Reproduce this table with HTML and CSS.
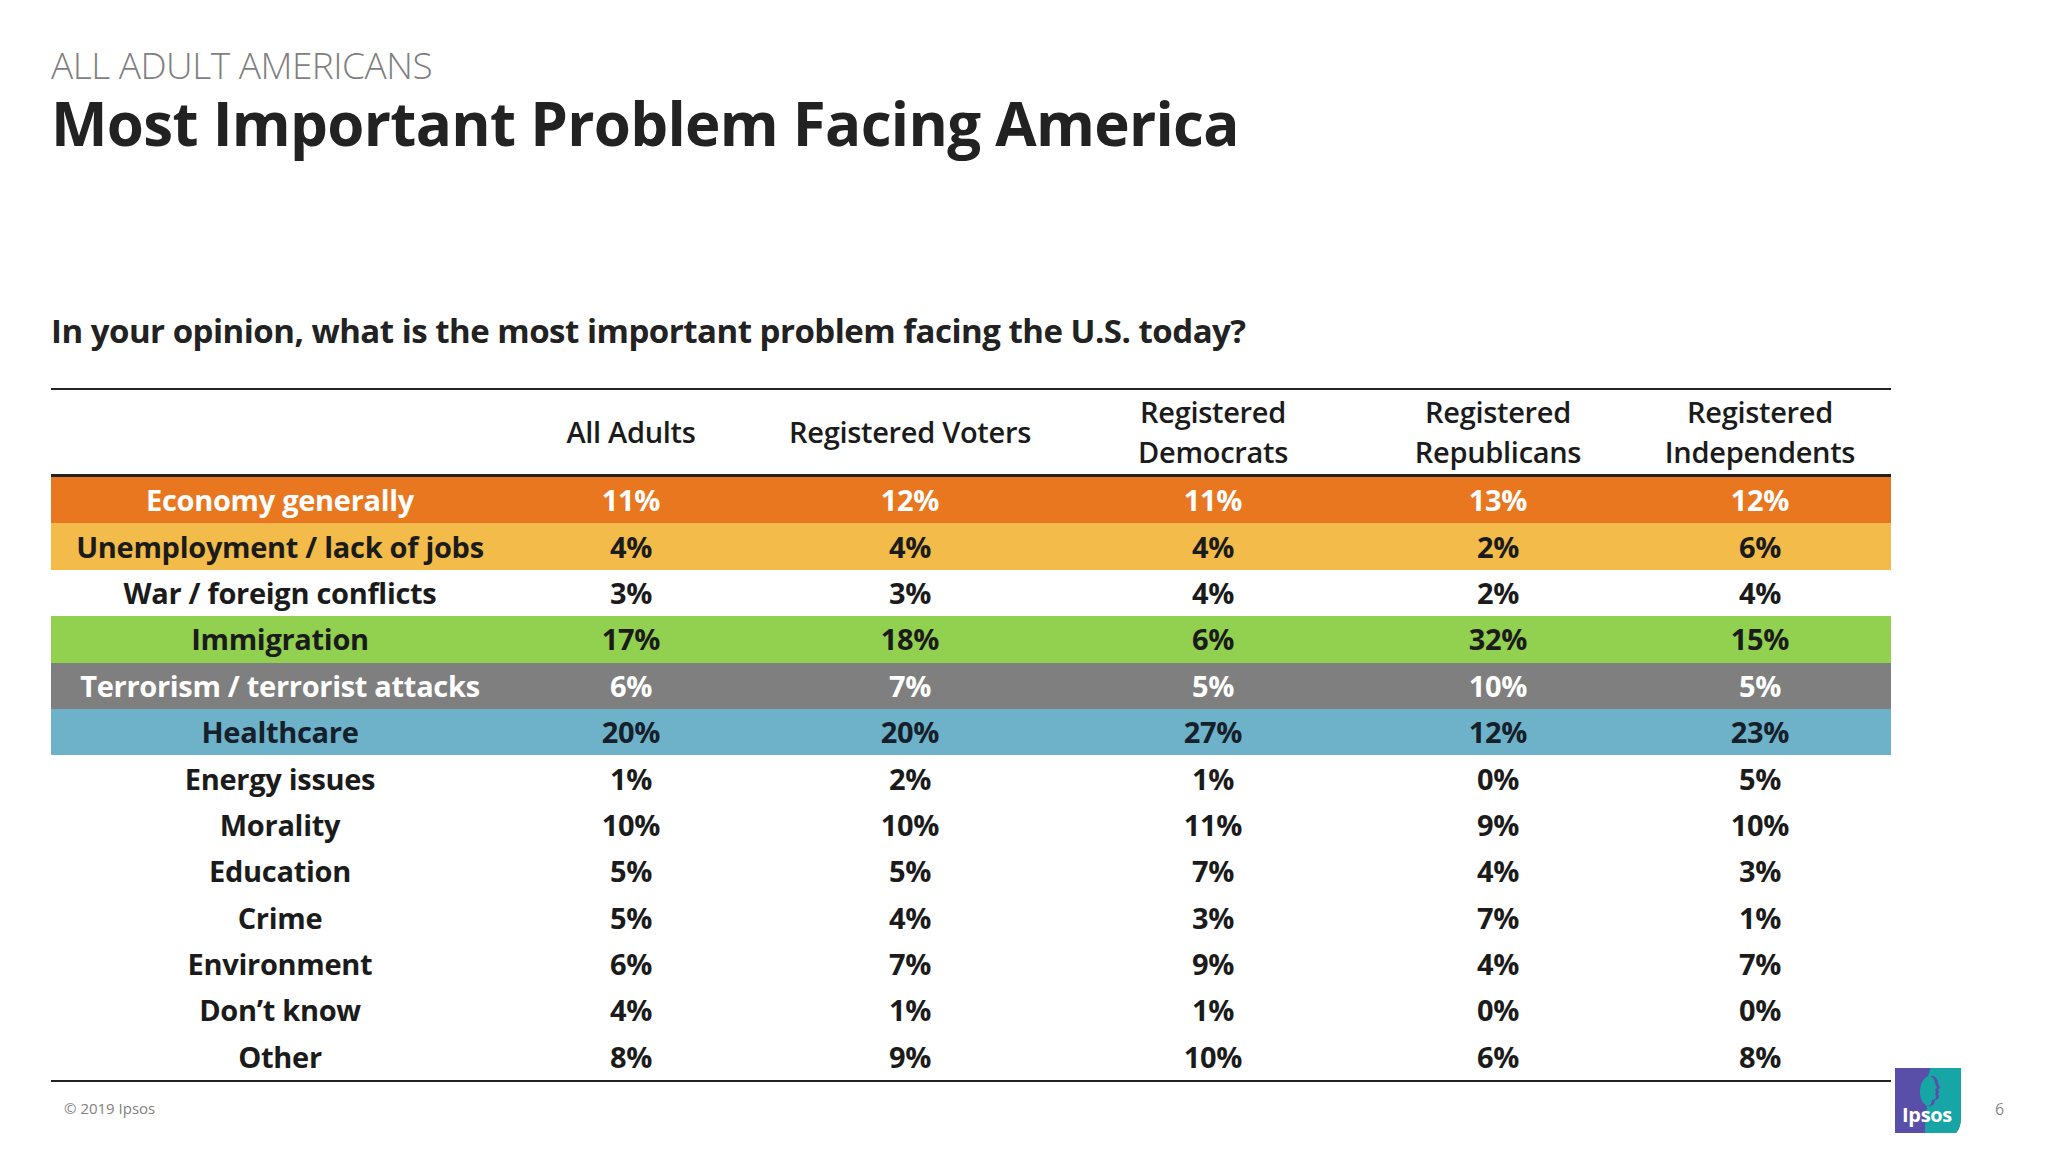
FILE: index.html
```html
<!DOCTYPE html>
<html lang="en">
<head>
<meta charset="utf-8">
<title>Most Important Problem Facing America</title>
<link rel="stylesheet" href="styles.css">
</head>
<body>
<div class="slide">
  <div class="main">
    <div class="kicker">ALL ADULT AMERICANS</div>
    <h1 class="title">Most Important Problem Facing America</h1>
    <div class="question">In your opinion, what is the most important problem facing the U.S. today?</div>
    <div class="table">
      <div class="head">
        <div class="hc"></div>
        <div class="hc">All Adults</div>
        <div class="hc">Registered Voters</div>
        <div class="hc">Registered<br>Democrats</div>
        <div class="hc">Registered<br>Republicans</div>
        <div class="hc">Registered<br>Independents</div>
      </div>
      <div class="row orange"><div>Economy generally</div><div>11%</div><div>12%</div><div>11%</div><div>13%</div><div>12%</div></div>
      <div class="row yellow"><div>Unemployment / lack of jobs</div><div>4%</div><div>4%</div><div>4%</div><div>2%</div><div>6%</div></div>
      <div class="row"><div>War / foreign conflicts</div><div>3%</div><div>3%</div><div>4%</div><div>2%</div><div>4%</div></div>
      <div class="row green"><div>Immigration</div><div>17%</div><div>18%</div><div>6%</div><div>32%</div><div>15%</div></div>
      <div class="row gray"><div>Terrorism / terrorist attacks</div><div>6%</div><div>7%</div><div>5%</div><div>10%</div><div>5%</div></div>
      <div class="row blue"><div>Healthcare</div><div>20%</div><div>20%</div><div>27%</div><div>12%</div><div>23%</div></div>
      <div class="row"><div>Energy issues</div><div>1%</div><div>2%</div><div>1%</div><div>0%</div><div>5%</div></div>
      <div class="row"><div>Morality</div><div>10%</div><div>10%</div><div>11%</div><div>9%</div><div>10%</div></div>
      <div class="row"><div>Education</div><div>5%</div><div>5%</div><div>7%</div><div>4%</div><div>3%</div></div>
      <div class="row"><div>Crime</div><div>5%</div><div>4%</div><div>3%</div><div>7%</div><div>1%</div></div>
      <div class="row"><div>Environment</div><div>6%</div><div>7%</div><div>9%</div><div>4%</div><div>7%</div></div>
      <div class="row"><div>Don’t know</div><div>4%</div><div>1%</div><div>1%</div><div>0%</div><div>0%</div></div>
      <div class="row"><div>Other</div><div>8%</div><div>9%</div><div>10%</div><div>6%</div><div>8%</div></div>
    </div>
    <div class="copyright">© 2019 Ipsos</div>
  </div>
  <div class="aside">
    <svg class="logo" width="66" height="65" viewBox="0 0 66 65" aria-label="Ipsos">
      <path d="M0 0 H66 V48 Q66 60 61 65 H0 Z" fill="#5a4fa8"/>
      <path d="M35 0 H66 V48 Q66 60 61 65 H30 C30 55 31 46 32 38 C28 36 25 31 25 24 C25 15 29 10 33 8 C34 5 35 3 35 0 Z" fill="#17a5a6"/>
      <path d="M35 8 C38 9 40 12 40 15 L42 20 L40 21 L41 24 L40 26 L41 28 C41 31 39 32 37 32 L36 36 C35 37 34 38 32 38 L45 38 L45 8 Z" fill="#5a4fa8"/>
      <path d="M48 8 L48 38 L35 38 C37 38 38 37 39 36 L40 32 C42 32 44 31 44 28 L43 26 L44 24 L43 21 L45 20 L43 15 C43 12 41 9 38 8 Z" fill="#17a5a6"/>
      <text x="32" y="54" class="logo-text">Ipsos</text>
    </svg>
    <div class="pagenum">6</div>
  </div>
</div>
</body>
</html>
```

FILE: styles.css
```css
html, body {
  margin: 0;
  padding: 0;
  background: #ffffff;
}

body {
  width: 2048px;
  height: 1152px;
  overflow: hidden;
  font-family: "Open Sans", "Liberation Sans", sans-serif;
  color: #1b1b1b;
}

.slide {
  display: flex;
  box-sizing: border-box;
  height: 1152px;
  padding-left: 51px;
}

.main {
  width: 1840px;
  display: flex;
  flex-direction: column;
}

.kicker {
  margin-top: 40px;
  font-size: 37px;
  line-height: 50px;
  font-weight: 300;
  color: #7f7f7f;
  letter-spacing: -0.5px;
}

.title {
  margin: 0;
  font-size: 60px;
  line-height: 66px;
  font-weight: 700;
  color: #222222;
  letter-spacing: -0.7px;
}

.question {
  margin-top: 152px;
  font-size: 33px;
  line-height: 45px;
  font-weight: 700;
  color: #222222;
  letter-spacing: -0.5px;
}

.table {
  margin-top: 35px;
  border-top: 2px solid #222222;
  border-bottom: 2px solid #222222;
  display: grid;
  grid-template-columns: 458px 244px 314px 292px 278px 254px;
  grid-template-rows: 87px;
  grid-auto-rows: 46.4px;
  font-size: 29px;
  font-weight: 700;
  letter-spacing: -0.3px;
}

.head, .row {
  display: contents;
}

.hc {
  box-sizing: border-box;
  height: 87px;
  border-bottom: 3px solid #222222;
  display: flex;
  align-items: center;
  justify-content: center;
  text-align: center;
  font-weight: 600;
  line-height: 40px;
  color: #1b1b1b;
  white-space: nowrap;
}

.row > div {
  display: flex;
  align-items: center;
  justify-content: center;
  white-space: nowrap;
  line-height: 46px;
}

.hc:last-child,
.row > div:last-child {
  padding-right: 8px;
}

.row.orange > div { background: #e8771f; color: #ffffff; }
.row.yellow > div { background: #f2bb4a; }
.row.green > div { background: #92d050; }
.row.gray > div { background: #7f7f7f; color: #ffffff; }
.row.blue > div { background: #6db2c9; color: #15202b; }

.copyright {
  margin-top: 16px;
  margin-left: 13px;
  font-size: 15px;
  line-height: 20px;
  color: #7f7f7f;
}

.aside {
  display: flex;
  align-items: flex-end;
  margin-left: 4px;
  padding-bottom: 19px;
  gap: 34px;
}

.logo {
  display: block;
}

.logo-text {
  font-family: "Open Sans", sans-serif;
  font-weight: 700;
  font-size: 20px;
  fill: #ffffff;
  text-anchor: middle;
  letter-spacing: -0.3px;
}

.pagenum {
  margin-bottom: 14px;
  font-size: 16px;
  line-height: 20px;
  color: #8a8a8a;
}
```
